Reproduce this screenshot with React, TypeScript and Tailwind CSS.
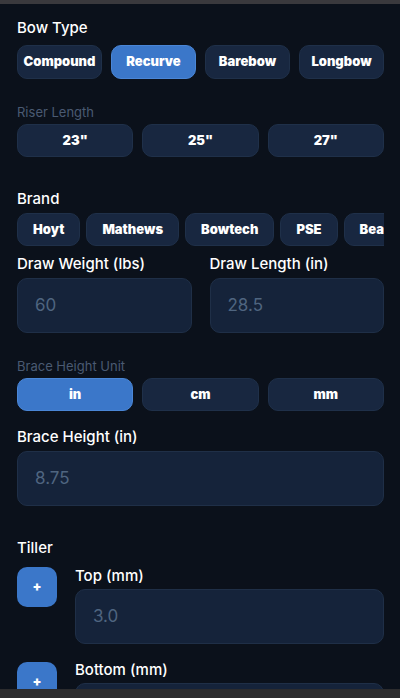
import React from "react";

const BOW_TYPES = ["Compound", "Recurve", "Barebow", "Longbow"];
const RISERS = ['23"', '25"', '27"'];
const BRANDS = ["Hoyt", "Mathews", "Bowtech", "PSE", "Bear"];
const UNITS = ["in", "cm", "mm"];

const font = { fontFamily: "Inter, 'Noto Sans', sans-serif" };

const Pill = ({ label, active, className = "" }: { label: string; active?: boolean; className?: string }) => (
  <button
    className={`h-[34px] rounded-[10px] border text-[13px] font-black text-white whitespace-nowrap ${
      active ? "bg-[#3b77c9] border-[#4a86d6]" : "bg-[#182740] border-[#1f3049]"
    } ${className}`}
  >
    {label}
  </button>
);

const Field = ({ value }: { value: string }) => (
  <div className="h-[55px] rounded-[10px] border border-[#1f2f47] bg-[#15233a] flex items-center pl-[17px] text-[17px] text-[#4f6580]">
    {value}
  </div>
);

const App = () => {
  return (
    <div className="w-[400px] h-[698px] bg-[#0b111b] overflow-hidden" style={font}>
      <div className="h-1 bg-[#3a393d]" />
      <div className="pl-[17px] pr-4 pt-[14px]">
        {/* Bow type */}
        <div className="h-5 text-[15px] leading-5 font-medium text-white">Bow Type</div>
        <div className="mt-[7px] flex gap-[9px]">
          {BOW_TYPES.map((t) => (
            <Pill key={t} label={t} active={t === "Recurve"} className="flex-1" />
          ))}
        </div>

        {/* Riser */}
        <div className="mt-[25px] h-4 text-[13px] leading-4 text-[#4a5a72]">Riser Length</div>
        <div className="mt-1 flex gap-[9px]">
          {RISERS.map((r) => (
            <Pill key={r} label={r} className="flex-1 !h-[33px]" />
          ))}
        </div>

        {/* Brand */}
        <div className="mt-8 h-5 text-[15px] leading-5 font-medium text-white">Brand</div>
        <div className="mt-1 flex gap-[6px] overflow-hidden">
          {BRANDS.map((b) => (
            <Pill key={b} label={b} className="!h-[33px] px-[15px] shrink-0" />
          ))}
        </div>

        {/* Draw */}
        <div className="mt-2 grid grid-cols-2 gap-[18px]">
          <div>
            <div className="h-5 text-[15px] leading-5 font-medium text-white">Draw Weight (lbs)</div>
            <div className="mt-1">
              <Field value="60" />
            </div>
          </div>
          <div>
            <div className="h-5 text-[15px] leading-5 font-medium text-white">Draw Length (in)</div>
            <div className="mt-1">
              <Field value="28.5" />
            </div>
          </div>
        </div>

        {/* Brace unit */}
        <div className="mt-[25px] h-4 text-[13px] leading-4 text-[#4a5a72]">Brace Height Unit</div>
        <div className="mt-1 flex gap-[9px]">
          {UNITS.map((u) => (
            <Pill key={u} label={u} active={u === "in"} className="flex-1 !h-[33px]" />
          ))}
        </div>

        {/* Brace height */}
        <div className="mt-4 h-5 text-[15px] leading-5 font-medium text-white">Brace Height (in)</div>
        <div className="mt-1">
          <Field value="8.75" />
        </div>

        {/* Tiller */}
        <div className="mt-8 h-5 text-[15px] leading-5 font-medium text-white">Tiller</div>
        <div className="mt-2 flex gap-[18px]">
          <button className="mt-px w-10 h-10 shrink-0 rounded-[10px] bg-[#3b77c9] text-white text-[13px] font-black">+</button>
          <div className="flex-1">
            <div className="h-5 text-[15px] leading-5 font-medium text-white">Top (mm)</div>
            <div className="mt-[3px]">
              <Field value="3.0" />
            </div>
          </div>
        </div>
        <div className="mt-4 flex gap-[18px]">
          <button className="mt-[2px] w-10 h-10 shrink-0 rounded-[10px] bg-[#3b77c9] text-white text-[13px] font-black">+</button>
          <div className="flex-1">
            <div className="h-5 text-[15px] leading-5 font-medium text-white">Bottom (mm)</div>
            <div className="mt-[3px]">
              <Field value="0.0" />
            </div>
          </div>
        </div>
      </div>
      <div className="fixed left-0 bottom-0 w-[400px] h-[9px] bg-[#2c2c2e]" />
    </div>
  );
};

export default App;
